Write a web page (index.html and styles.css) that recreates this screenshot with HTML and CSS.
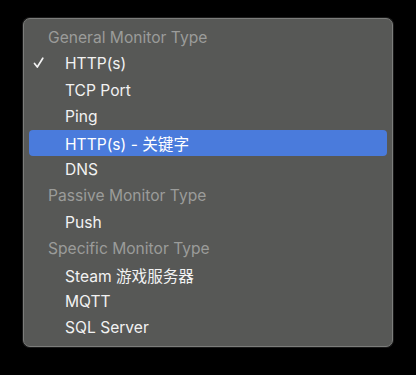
FILE: index.html
```html
<!DOCTYPE html>
<html>
<head>
<meta charset="utf-8">
<link rel="stylesheet" href="styles.css">
</head>
<body>
<div class="menu">
  <div class="header">General Monitor Type</div>
  <div class="item"><svg class="check" width="12" height="12" viewBox="0 0 12 12"><path d="M1.5 6.5 L4.3 10 L9.8 1.2" fill="none" stroke="#f2f2f2" stroke-width="1.7" stroke-linecap="round" stroke-linejoin="round"/></svg>HTTP(s)</div>
  <div class="item">TCP Port</div>
  <div class="item">Ping</div>
  <div class="item selected">HTTP(s) - 关键字</div>
  <div class="item">DNS</div>
  <div class="header">Passive Monitor Type</div>
  <div class="item">Push</div>
  <div class="header">Specific Monitor Type</div>
  <div class="item">Steam 游戏服务器</div>
  <div class="item">MQTT</div>
  <div class="item">SQL Server</div>
</div>
</body>
</html>
```
FILE: styles.css
```css
html, body {
  margin: 0;
  padding: 0;
  background: #000;
}
body {
  width: 416px;
  height: 375px;
  padding: 18px 0 0 23px;
  box-sizing: border-box;
  font-family: Inter, "Noto Sans CJK SC", sans-serif;
  font-size: 15.6px;
}
.menu {
  width: 370px;
  height: 329px;
  box-sizing: border-box;
  background: #575856;
  border: 1px solid #7c7d7b;
  border-radius: 7px;
  box-shadow: 0 0 0 1px #1a1a1a;
  padding: 5px 5px;
  display: flex;
  flex-direction: column;
}
.header, .item {
  height: 26.45px;
  display: flex;
  align-items: center;
  position: relative;
  border-radius: 4px;
}
.header {
  color: #9b9c9a;
  padding-left: 19px;
}
.item {
  color: #f2f2f2;
  padding-left: 36px;
}
.selected {
  background: #4a7bdc;
  color: #ffffff;
}
.check {
  position: absolute;
  left: 4px;
  top: 7px;
}
```
